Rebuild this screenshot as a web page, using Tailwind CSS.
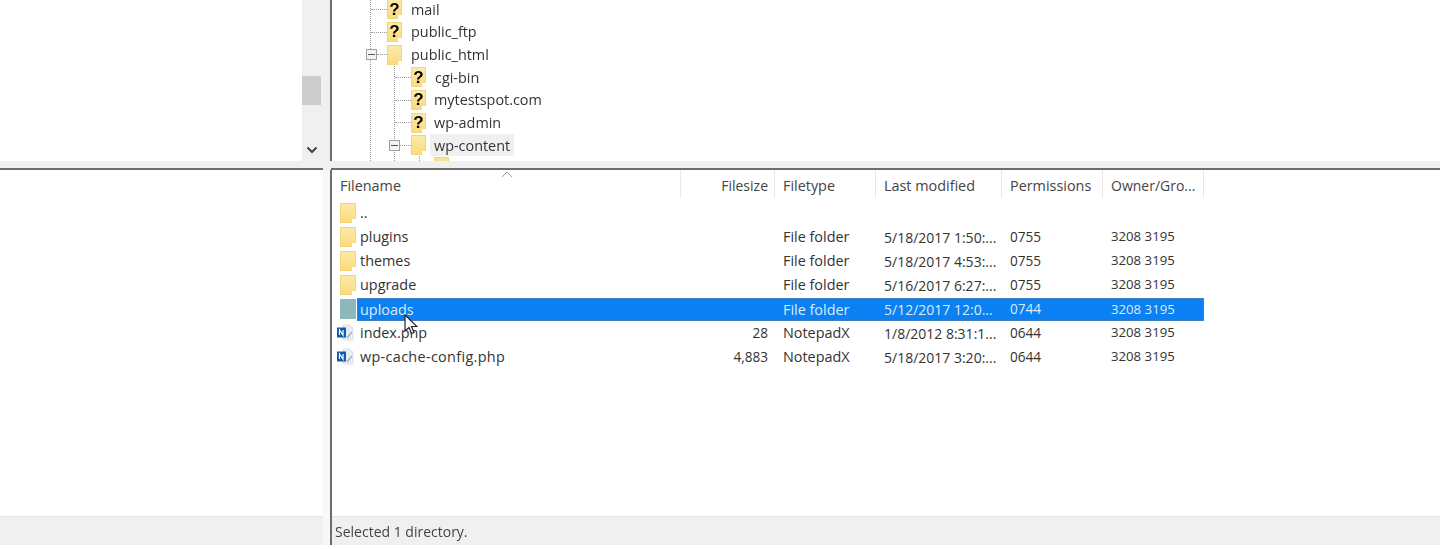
<!DOCTYPE html>
<html lang="en">
<head>
  <meta charset="UTF-8">
  <title>FileZilla</title>
  <script src="https://cdn.jsdelivr.net/npm/@tailwindcss/browser@4"></script>
</head>
<body class="bg-white text-[#333] h-[549px] w-[1440px] overflow-hidden font-['Open_Sans',sans-serif] text-[14.4px]">
  <div class="relative h-[549px] blur-[0.4px]">

    <!-- top panes -->
    <div class="flex h-[161px]">
      <div class="w-[302px] bg-white"></div>
      <div class="w-[19px] bg-[#f0f0f0] flex flex-col items-center">
        <div class="mt-[76px] w-[19px] h-[29px] bg-[#cdcdcd]"></div>
        <svg class="mt-[41px]" width="12" height="8" viewBox="0 0 12 8"><path d="M1.5 1.5 6 6l4.5-4.5" fill="none" stroke="#444" stroke-width="2"/></svg>
      </div>
      <div class="w-[9px] bg-[#f0f0f0]"></div>
      <div class="relative w-[1110px] bg-white border-l-2 border-[#6d6d6d] overflow-hidden">
        <!-- tree lines -->
        <div class="absolute left-[38px] top-0 h-[161px] border-l border-dotted border-[#999]"></div>
        <div class="absolute left-[62px] top-[66px] h-[95px] border-l border-dotted border-[#999]"></div>
        <div class="absolute left-[87px] top-[156px] h-[5px] border-l border-dotted border-[#999]"></div>

        <div class="-mt-[2px]">
          <div class="flex items-center h-[22.7px] pl-[39px]">
            <span class="w-[16px] border-t border-dotted border-[#999]"></span>
            <span class="relative w-[15px] h-[20px] bg-linear-to-b from-[#fdeaa8] to-[#fbdb7a] border border-[#f2d47c] flex items-center justify-center font-['Liberation_Sans'] font-bold text-[17px] text-black">?<span class="absolute right-[-1px] bottom-[-1px] w-[4px] h-[4px] bg-white"></span></span>
            <span class="ml-[9px]">mail</span>
          </div>
          <div class="flex items-center h-[22.7px] pl-[39px]">
            <span class="w-[16px] border-t border-dotted border-[#999]"></span>
            <span class="relative w-[15px] h-[20px] bg-linear-to-b from-[#fdeaa8] to-[#fbdb7a] border border-[#f2d47c] flex items-center justify-center font-['Liberation_Sans'] font-bold text-[17px] text-black">?<span class="absolute right-[-1px] bottom-[-1px] w-[4px] h-[4px] bg-white"></span></span>
            <span class="ml-[9px]">public_ftp</span>
          </div>
          <div class="flex items-center h-[22.7px] pl-[34px]">
            <span class="w-[11px] h-[11px] bg-[#f4f4f4] border border-[#a0a0a0] flex items-center justify-center z-10"><span class="w-[7px] h-[1px] bg-[#555]"></span></span>
            <span class="w-[10px] border-t border-dotted border-[#999]"></span>
            <span class="relative w-[15px] h-[20px] bg-linear-to-b from-[#fdeaa8] to-[#fbdb7a] border border-[#f2d47c]"><span class="absolute right-[-1px] bottom-[-1px] w-[4px] h-[4px] bg-white"></span></span>
            <span class="ml-[9px]">public_html</span>
          </div>
          <div class="flex items-center h-[22.7px] pl-[63px]">
            <span class="w-[16px] border-t border-dotted border-[#999]"></span>
            <span class="relative w-[15px] h-[20px] bg-linear-to-b from-[#fdeaa8] to-[#fbdb7a] border border-[#f2d47c] flex items-center justify-center font-['Liberation_Sans'] font-bold text-[17px] text-black">?<span class="absolute right-[-1px] bottom-[-1px] w-[4px] h-[4px] bg-white"></span></span>
            <span class="ml-[9px]">cgi-bin</span>
          </div>
          <div class="flex items-center h-[22.7px] pl-[63px]">
            <span class="w-[16px] border-t border-dotted border-[#999]"></span>
            <span class="relative w-[15px] h-[20px] bg-linear-to-b from-[#fdeaa8] to-[#fbdb7a] border border-[#f2d47c] flex items-center justify-center font-['Liberation_Sans'] font-bold text-[17px] text-black">?<span class="absolute right-[-1px] bottom-[-1px] w-[4px] h-[4px] bg-white"></span></span>
            <span class="ml-[8px]">mytestspot.com</span>
          </div>
          <div class="flex items-center h-[22.7px] pl-[63px]">
            <span class="w-[16px] border-t border-dotted border-[#999]"></span>
            <span class="relative w-[15px] h-[20px] bg-linear-to-b from-[#fdeaa8] to-[#fbdb7a] border border-[#f2d47c] flex items-center justify-center font-['Liberation_Sans'] font-bold text-[17px] text-black">?<span class="absolute right-[-1px] bottom-[-1px] w-[4px] h-[4px] bg-white"></span></span>
            <span class="ml-[8px]">wp-admin</span>
          </div>
          <div class="flex items-center h-[22.7px] pl-[57px]">
            <span class="w-[11px] h-[11px] bg-[#f4f4f4] border border-[#a0a0a0] flex items-center justify-center z-10"><span class="w-[7px] h-[1px] bg-[#555]"></span></span>
            <span class="w-[11px] border-t border-dotted border-[#999]"></span>
            <span class="relative w-[15px] h-[20px] bg-linear-to-b from-[#fdeaa8] to-[#fbdb7a] border border-[#f2d47c]"><span class="absolute right-[-1px] bottom-[-1px] w-[4px] h-[4px] bg-white"></span></span>
            <span class="ml-[4px] px-[4px] bg-[#f0f0f0] h-[22px] leading-[23px]">wp-content</span>
          </div>
          <div class="flex items-start h-[22.7px] pl-[102px]">
            <span class="w-[15px] h-[20px] bg-[#fde28e] border border-[#f2d47c]"></span>
          </div>
        </div>
      </div>
    </div>

    <!-- splitter -->
    <div class="flex h-[9px]">
      <div class="w-[323px] bg-[#f0f0f0] border-b-2 border-[#6d6d6d]"></div>
      <div class="w-[8px] bg-[#f0f0f0]"></div>
      <div class="flex-1 bg-[#f0f0f0] border-b-2 border-[#6d6d6d]"></div>
    </div>

    <!-- bottom panes -->
    <div class="flex h-[375px]">
      <div class="w-[323px] flex flex-col">
        <div class="h-[346px] bg-white"></div>
        <div class="h-[29px] bg-[#f0f0f0] border-t border-[#e4e4e4]"></div>
      </div>
      <div class="w-[7px] bg-[#f8f8f8]"></div>
      <div class="flex-1 border-l-2 border-[#6d6d6d] flex flex-col">
        <div class="h-[346px] bg-white relative">
          <!-- header -->
          <div class="flex h-[29px] items-start text-[#444] leading-[32px]">
            <div class="w-[349px] h-[28px] pl-[8px] border-r border-[#e8e8e8]">Filename</div>
            <div class="w-[94px] h-[28px] pr-[6px] text-right border-r border-[#e8e8e8] text-[14px]">Filesize</div>
            <div class="w-[101px] h-[28px] pl-[8px] border-r border-[#e8e8e8]">Filetype</div>
            <div class="w-[126px] h-[28px] pl-[8px] border-r border-[#e8e8e8]">Last modified</div>
            <div class="w-[101px] h-[28px] pl-[8px] border-r border-[#e8e8e8]">Permissions</div>
            <div class="w-[101px] h-[28px] pl-[8px] border-r border-[#e8e8e8] text-[14px]">Owner/Gro...</div>
          </div>
          <svg class="absolute left-[169px] top-[1px]" width="12" height="7" viewBox="0 0 12 7"><path d="M1 6l5-5 5 5" fill="none" stroke="#999" stroke-width="1"/></svg>

          <!-- rows -->
          <div class="flex flex-col w-[872px] mt-[2px]">
            <div class="flex h-[24px] items-center">
              <div class="w-[349px] flex items-center pl-[8px]"><span class="relative w-[16px] h-[20px] bg-linear-to-b from-[#fdeaa8] to-[#fbdb7a] border border-[#f2d47c]"><span class="absolute right-[-1px] bottom-[-1px] w-[4px] h-[4px] bg-white"></span></span><span class="ml-[4px]">..</span></div>
            </div>
            <div class="flex h-[24px] items-center">
              <div class="w-[349px] flex items-center pl-[8px]"><span class="relative w-[16px] h-[20px] bg-linear-to-b from-[#fdeaa8] to-[#fbdb7a] border border-[#f2d47c]"><span class="absolute right-[-1px] bottom-[-1px] w-[4px] h-[4px] bg-white"></span></span><span class="ml-[4px]">plugins</span></div>
              <div class="w-[94px]"></div><div class="w-[101px] pl-[8px]">File folder</div><div class="w-[126px] pl-[8px] text-[14px]">5/18/2017 1:50:...</div><div class="w-[101px] pl-[8px] text-[13.6px]">0755</div><div class="w-[101px] pl-[8px] text-[13.2px]">3208 3195</div>
            </div>
            <div class="flex h-[24px] items-center">
              <div class="w-[349px] flex items-center pl-[8px]"><span class="relative w-[16px] h-[20px] bg-linear-to-b from-[#fdeaa8] to-[#fbdb7a] border border-[#f2d47c]"><span class="absolute right-[-1px] bottom-[-1px] w-[4px] h-[4px] bg-white"></span></span><span class="ml-[4px]">themes</span></div>
              <div class="w-[94px]"></div><div class="w-[101px] pl-[8px]">File folder</div><div class="w-[126px] pl-[8px] text-[14px]">5/18/2017 4:53:...</div><div class="w-[101px] pl-[8px] text-[13.6px]">0755</div><div class="w-[101px] pl-[8px] text-[13.2px]">3208 3195</div>
            </div>
            <div class="flex h-[24px] items-center">
              <div class="w-[349px] flex items-center pl-[8px]"><span class="relative w-[16px] h-[20px] bg-linear-to-b from-[#fdeaa8] to-[#fbdb7a] border border-[#f2d47c]"><span class="absolute right-[-1px] bottom-[-1px] w-[4px] h-[4px] bg-white"></span></span><span class="ml-[4px]">upgrade</span></div>
              <div class="w-[94px]"></div><div class="w-[101px] pl-[8px]">File folder</div><div class="w-[126px] pl-[8px] text-[14px]">5/16/2017 6:27:...</div><div class="w-[101px] pl-[8px] text-[13.6px]">0755</div><div class="w-[101px] pl-[8px] text-[13.2px]">3208 3195</div>
            </div>
            <div class="flex h-[24px] items-end">
              <div class="w-[26px] h-[24px] flex items-center pl-[8px]"><span class="w-[16px] h-[20px] bg-[#8fb6ba]"></span></div>
              <div class="flex items-center flex-1 h-[23px] bg-[#0a80f2] border border-[#3f7fbd] text-[#dcebfa]">
                <div class="w-[323px] pl-[2px] shrink-0">uploads</div>
                <div class="w-[94px] shrink-0"></div><div class="w-[101px] pl-[8px]">File folder</div><div class="w-[126px] pl-[8px] text-[14px]">5/12/2017 12:0...</div><div class="w-[101px] pl-[8px] text-[13.6px]">0744</div><div class="w-[100px] pl-[8px] text-[13.2px]">3208 3195</div>
              </div>
            </div>
            <div class="flex h-[24px] items-center">
              <div class="w-[349px] flex items-center pl-[5px]">
                <svg width="18" height="17" viewBox="0 0 18 17"><path d="M6 1h6l4 3v12H6z" fill="#e9edf3" stroke="#dde1e7"/><rect x="0" y="3.5" width="9" height="10" fill="#0b5cb0"/><path d="M2.5 11V6l3.5 5V6" fill="none" stroke="#fff" stroke-width="1.2"/><path d="M10 14l5-6" stroke="#a9b4c2" stroke-width="1.6"/></svg>
                <span class="ml-[5px]">index.php</span>
              </div>
              <div class="w-[94px] pr-[7px] text-right text-[13.6px]">28</div><div class="w-[101px] pl-[8px]">NotepadX</div><div class="w-[126px] pl-[8px] text-[14px]">1/8/2012 8:31:1...</div><div class="w-[101px] pl-[8px] text-[13.6px]">0644</div><div class="w-[101px] pl-[8px] text-[13.2px]">3208 3195</div>
            </div>
            <div class="flex h-[24px] items-center">
              <div class="w-[349px] flex items-center pl-[5px]">
                <svg width="18" height="17" viewBox="0 0 18 17"><path d="M6 1h6l4 3v12H6z" fill="#e9edf3" stroke="#dde1e7"/><rect x="0" y="3.5" width="9" height="10" fill="#0b5cb0"/><path d="M2.5 11V6l3.5 5V6" fill="none" stroke="#fff" stroke-width="1.2"/><path d="M10 14l5-6" stroke="#a9b4c2" stroke-width="1.6"/></svg>
                <span class="ml-[5px] tracking-[0.33px]">wp-cache-config.php</span>
              </div>
              <div class="w-[94px] pr-[7px] text-right text-[13.6px]">4,883</div><div class="w-[101px] pl-[8px]">NotepadX</div><div class="w-[126px] pl-[8px] text-[14px]">5/18/2017 3:20:...</div><div class="w-[101px] pl-[8px] text-[13.6px]">0644</div><div class="w-[101px] pl-[8px] text-[13.2px]">3208 3195</div>
            </div>
          </div>
        </div>
        <div class="h-[29px] bg-[#f0f0f0] border-t border-[#e4e4e4] pl-[3px] leading-[29px] text-[#444] text-[14px]">Selected 1 directory.</div>
      </div>
    </div>

    <!-- mouse pointer -->
    <svg class="absolute left-[404px] top-[314px]" width="14" height="22" viewBox="0 0 14 22"><path d="M1 1v16l4-3.5 2.5 6 2.5-1-2.5-6H13z" fill="#fff" stroke="#222" stroke-width="1.2"/></svg>
  </div>
</body>
</html>
